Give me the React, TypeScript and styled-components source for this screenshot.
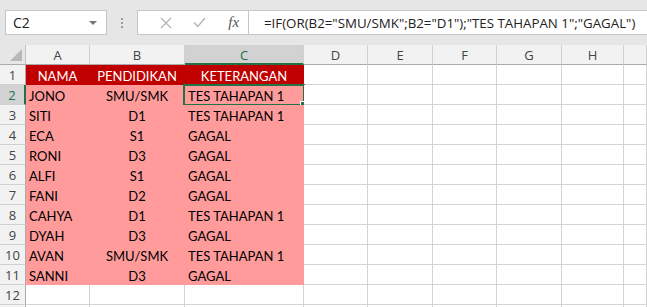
import React from "react"
import styled, { createGlobalStyle, css } from "styled-components"

const GlobalStyle = createGlobalStyle`
  html, body {
    margin: 0;
    padding: 0;
    background: #ffffff;
    overflow: hidden;
  }
`

const Window = styled.div`
  width: 647px;
  height: 307px;
  overflow: hidden;
  background: #ffffff;
`

// ---- formula bar area ----
const TopBar = styled.div`
  height: 45px;
  box-sizing: border-box;
  background: #e6e6e6;
  padding: 10px 0 10px 5px;
  display: flex;
  align-items: stretch;
`

const NameBox = styled.div`
  width: 102px;
  box-sizing: border-box;
  background: #ffffff;
  border: 1px solid #c6c6c6;
  display: flex;
  align-items: center;
  justify-content: space-between;
  padding: 0 9px 0 7px;
  font-family: "Open Sans", "Liberation Sans", sans-serif;
  font-size: 14px;
  color: #222;
`

const DropArrow = styled.span`
  width: 0;
  height: 0;
  border-left: 4px solid transparent;
  border-right: 4px solid transparent;
  border-top: 4px solid #777;
  margin-top: 1px;
`

const Grip = styled.div`
  width: 30px;
  display: flex;
  flex-direction: column;
  align-items: center;
  justify-content: center;
  gap: 2px;
`

const GripDot = styled.span`
  width: 2px;
  height: 2px;
  background: #9a9a9a;
`

const FxBox = styled.div`
  width: 111px;
  box-sizing: border-box;
  background: #ffffff;
  border: 1px solid #c6c6c6;
  border-right: none;
  display: flex;
  align-items: center;
  padding-left: 12px;
`

const FxSlot = styled.div`
  width: 37px;
  display: flex;
  align-items: center;
  justify-content: center;
`

const FxLabel = styled.span`
  font-family: "Liberation Serif", serif;
  font-style: italic;
  font-size: 15px;
  color: #555;
  margin-left: 4px;
`

const FormulaInput = styled.div`
  flex: 1;
  box-sizing: border-box;
  background: #ffffff;
  border: 1px solid #c6c6c6;
  border-right: none;
  display: flex;
  align-items: center;
  padding-left: 15px;
  font-family: "Open Sans", "Liberation Sans", sans-serif;
  font-size: 13.3px;
  color: #222;
  white-space: nowrap;
`

// ---- sheet grid ----
const COLS = [64, 95, 119, 64, 65, 64, 65, 62]

const Sheet = styled.div`
  display: grid;
  grid-template-columns: 26px ${COLS.map((c) => `${c}px`).join(" ")} 1fr;
  grid-auto-rows: 20px;
`

const Corner = styled.div`
  background: #e6e6e6;
  border-right: 1px solid #c6c6c6;
  border-bottom: 1px solid #ababab;
  box-sizing: border-box;
  position: relative;
  &::after {
    content: "";
    position: absolute;
    right: 3px;
    bottom: 3px;
    width: 0;
    height: 0;
    border-left: 12px solid transparent;
    border-bottom: 12px solid #b8b8b8;
  }
`

const headerText = css`
  font-family: "Open Sans", "Liberation Sans", sans-serif;
  font-size: 13px;
  display: flex;
  align-items: center;
  justify-content: center;
  box-sizing: border-box;
`

const ColHead = styled.div<{ $active?: boolean }>`
  ${headerText};
  background: ${(p) => (p.$active ? "#d2d2d2" : "#f2f2f2")};
  color: ${(p) => (p.$active ? "#217346" : "#444")};
  border-right: 1px solid #d0d0d0;
  border-bottom: ${(p) => (p.$active ? "2px solid #217346" : "1px solid #ababab")};
  padding-top: ${(p) => (p.$active ? "1px" : "0")};
`

const RowHead = styled.div<{ $active?: boolean }>`
  ${headerText};
  background: ${(p) => (p.$active ? "#d2d2d2" : "#f2f2f2")};
  color: ${(p) => (p.$active ? "#217346" : "#444")};
  border-right: ${(p) => (p.$active ? "2px solid #217346" : "1px solid #ababab")};
  border-bottom: 1px solid #d0d0d0;
`

type Fill = "head" | "body" | undefined

const fillColor = (f: Fill) => (f === "head" ? "#c00000" : f === "body" ? "#ff9b9b" : "#ffffff")

const Cell = styled.div<{ $fill?: Fill; $align?: "left" | "center"; $selected?: boolean }>`
  box-sizing: border-box;
  position: relative;
  background: ${(p) => fillColor(p.$fill)};
  border-right: 1px solid ${(p) => (p.$fill ? fillColor(p.$fill) : "#d4d4d4")};
  border-bottom: 1px solid ${(p) => (p.$fill ? fillColor(p.$fill) : "#d4d4d4")};
  color: ${(p) => (p.$fill === "head" ? "#ffffff" : "#000000")};
  font-family: Lato, "Liberation Sans", sans-serif;
  font-size: 13px;
  line-height: 20px;
  padding: 1px 3px 0 3px;
  text-align: ${(p) => p.$align || "left"};
  white-space: nowrap;
  ${(p) =>
    p.$selected &&
    css`
      &::before {
        content: "";
        position: absolute;
        left: -2px;
        top: -1px;
        right: -2px;
        bottom: -2px;
        border: 2px solid #217346;
        pointer-events: none;
      }
      &::after {
        content: "";
        position: absolute;
        right: -4px;
        bottom: -4px;
        width: 5px;
        height: 5px;
        background: #217346;
        border: 1px solid #ffffff;
      }
    `}
`

const data: [string, string, string][] = [
  ["JONO", "SMU/SMK", "TES TAHAPAN 1"],
  ["SITI", "D1", "TES TAHAPAN 1"],
  ["ECA", "S1", "GAGAL"],
  ["RONI", "D3", "GAGAL"],
  ["ALFI", "S1", "GAGAL"],
  ["FANI", "D2", "GAGAL"],
  ["CAHYA", "D1", "TES TAHAPAN 1"],
  ["DYAH", "D3", "GAGAL"],
  ["AVAN", "SMU/SMK", "TES TAHAPAN 1"],
  ["SANNI", "D3", "GAGAL"],
]

const letters = ["A", "B", "C", "D", "E", "F", "G", "H", ""]

const EmptyCells = ({ n }: { n: number }) => (
  <>
    {Array.from({ length: n }).map((_, i) => (
      <Cell key={i} />
    ))}
  </>
)

const CancelIcon = () => (
  <svg width="12" height="12" viewBox="0 0 12 12">
    <path d="M1 1 L11 11 M11 1 L1 11" stroke="#b4b4b4" strokeWidth="1.3" fill="none" />
  </svg>
)

const EnterIcon = () => (
  <svg width="13" height="11" viewBox="0 0 13 11">
    <path d="M1 5.5 L4.8 9.5 L12 1" stroke="#b4b4b4" strokeWidth="1.4" fill="none" />
  </svg>
)

export default function App() {
  return (
    <Window>
      <GlobalStyle />
      <TopBar>
        <NameBox>
          <span>C2</span>
          <DropArrow />
        </NameBox>
        <Grip>
          <GripDot />
          <GripDot />
          <GripDot />
        </Grip>
        <FxBox>
          <FxSlot>
            <CancelIcon />
          </FxSlot>
          <FxSlot>
            <EnterIcon />
          </FxSlot>
          <FxSlot>
            <FxLabel>fx</FxLabel>
          </FxSlot>
        </FxBox>
        <FormulaInput>=IF(OR(B2="SMU/SMK";B2="D1");"TES TAHAPAN 1";"GAGAL")</FormulaInput>
      </TopBar>

      <Sheet>
        <Corner />
        {letters.map((l, i) => (
          <ColHead key={i} $active={l === "C"}>
            {l}
          </ColHead>
        ))}

        <RowHead>1</RowHead>
        <Cell $fill="head" $align="center">NAMA</Cell>
        <Cell $fill="head" $align="center">PENDIDIKAN</Cell>
        <Cell $fill="head" $align="center">KETERANGAN</Cell>
        <EmptyCells n={6} />

        {data.map((row, i) => (
          <React.Fragment key={i}>
            <RowHead $active={i === 0}>{i + 2}</RowHead>
            <Cell $fill="body">{row[0]}</Cell>
            <Cell $fill="body" $align="center">{row[1]}</Cell>
            <Cell $fill="body" $selected={i === 0}>{row[2]}</Cell>
            <EmptyCells n={6} />
          </React.Fragment>
        ))}

        <RowHead>12</RowHead>
        <EmptyCells n={9} />
        <RowHead />
        <EmptyCells n={9} />
      </Sheet>
    </Window>
  )
}
